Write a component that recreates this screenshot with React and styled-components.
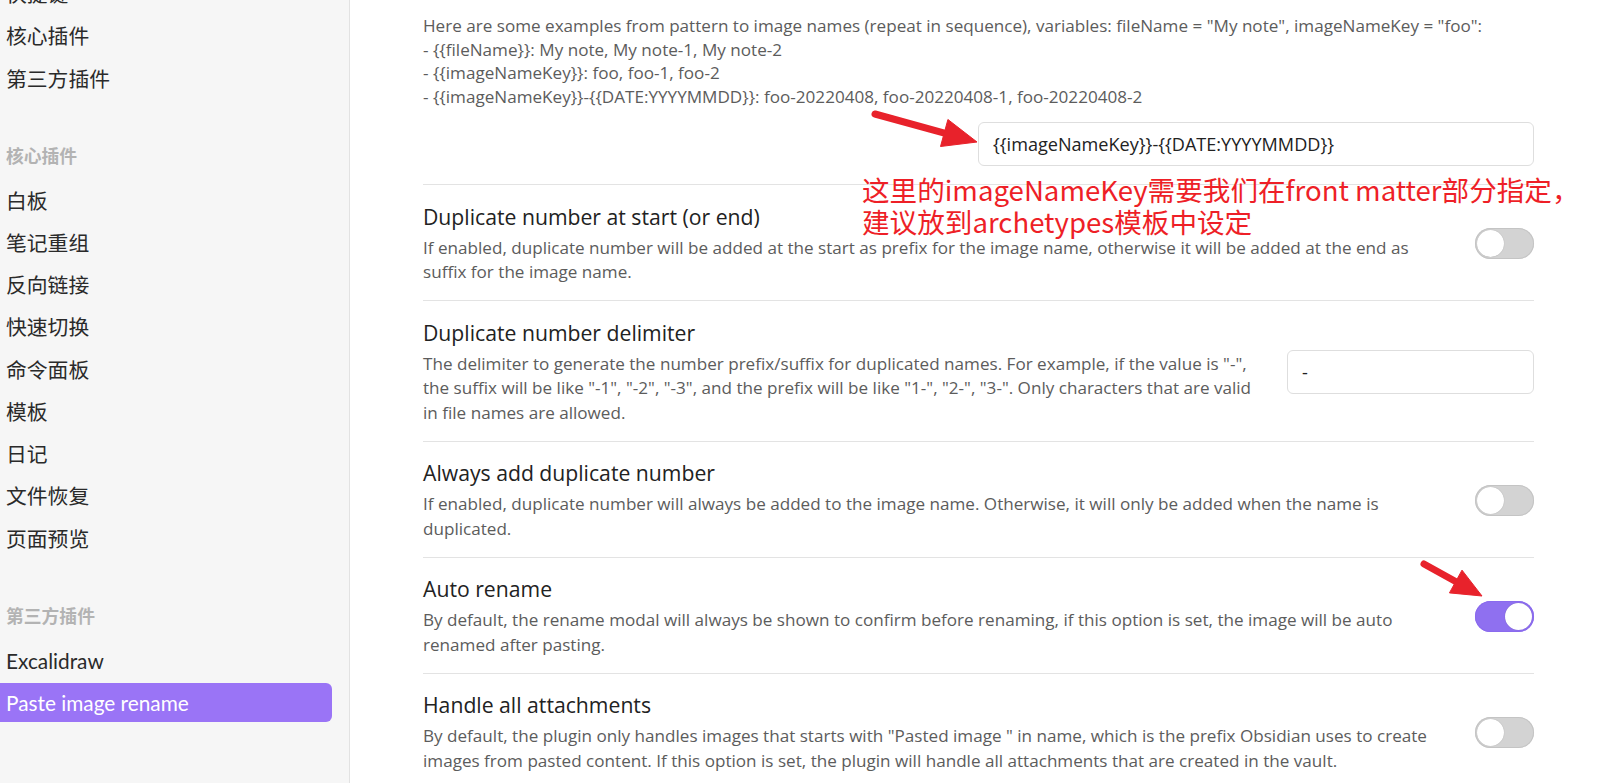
import React from "react";
import styled, { createGlobalStyle } from "styled-components";

const GlobalStyle = createGlobalStyle`
  html, body {
    margin: 0;
    padding: 0;
    background: #ffffff;
  }
  body {
    font-family: "Open Sans", "Noto Sans CJK SC", sans-serif;
    color: #222222;
  }
`;

const Page = styled.div`
  position: relative;
  display: flex;
  width: 1609px;
  height: 783px;
  overflow: hidden;
`;

const Sidebar = styled.nav`
  flex: 0 0 350px;
  box-sizing: border-box;
  background: #f6f6f6;
  border-right: 1px solid #e2e2e2;
  padding-right: 17px;
`;

const NavList = styled.div`
  margin-top: -26px;
`;

const NavItem = styled.div`
  height: 39px;
  line-height: 39px;
  margin-bottom: 3.25px;
  padding-left: 6px;
  font-family: "Lato", "Noto Sans CJK SC", sans-serif;
  font-size: 20.8px;
  color: ${(p) => (p.$active ? "#ffffff" : "#2a2a2a")};
  background: ${(p) => (p.$active ? "#9a74f6" : "transparent")};
  border-radius: 0 6px 6px 0;
  white-space: nowrap;
`;

const NavHeader = styled.div`
  margin: 45px 0 14px;
  padding-left: 6px;
  height: 24px;
  line-height: 24px;
  font-family: "Noto Sans CJK SC", sans-serif;
  font-size: 17.8px;
  font-weight: 700;
  color: #b3b3b3;
`;

const Main = styled.main`
  position: relative;
  flex: 1;
  min-width: 0;
  padding: 14px 75px 0 73px;
`;

const Intro = styled.div`
  font-size: 17.1px;
  line-height: 23.5px;
  color: #5c5c5c;
  white-space: pre-line;
`;

const InputRow = styled.div`
  display: flex;
  justify-content: flex-end;
  margin-top: 14px;
  padding-bottom: 18px;
`;

const TextInput = styled.input`
  box-sizing: border-box;
  width: ${(p) => p.$width}px;
  height: 44px;
  padding: 0 14px;
  border: 1px solid #dedede;
  border-radius: 6px;
  background: #ffffff;
  font-family: "Open Sans", sans-serif;
  font-size: 18.1px;
  color: #222222;
  outline: none;
`;

const SettingRow = styled.div`
  display: flex;
  align-items: center;
  gap: 24px;
  border-top: 1px solid #e3e3e3;
  padding: 17.5px 0 15.5px;
`;

const Info = styled.div`
  flex: 1;
  min-width: 0;
`;

const Name = styled.div`
  font-size: 21.2px;
  line-height: 28px;
  color: #222222;
`;

const Desc = styled.div`
  margin-top: 5px;
  font-size: 17.1px;
  line-height: 24.5px;
  color: #5c5c5c;
`;

const Toggle = styled.div`
  flex: 0 0 auto;
  box-sizing: border-box;
  display: flex;
  align-items: center;
  justify-content: ${(p) => (p.$on ? "flex-end" : "flex-start")};
  width: 59px;
  height: 31px;
  padding: 0 2px;
  border-radius: 16px;
  background: ${(p) => (p.$on ? "#8f70f0" : "#d3d3d3")};
  box-shadow: inset 0 0 0 1px ${(p) => (p.$on ? "#8a6aee" : "#c4c4c4")};
`;

const Knob = styled.div`
  width: 27px;
  height: 27px;
  border-radius: 50%;
  background: #ffffff;
  box-shadow: 0 0 1px rgba(0, 0, 0, 0.25);
`;

const Note = styled.div`
  position: absolute;
  left: 512px;
  top: 173px;
  font-family: "Noto Sans CJK SC", sans-serif;
  font-size: 27.6px;
  line-height: 32px;
  color: #ee1f27;
  white-space: nowrap;
  z-index: 2;
`;

const Overlay = styled.svg`
  position: absolute;
  left: 0;
  top: 0;
  pointer-events: none;
  z-index: 3;
`;

const Arrow = ({ x1, y1, x2, y2, head = 30, wing = 13 }) => {
  const len = Math.hypot(x2 - x1, y2 - y1);
  const ux = (x2 - x1) / len;
  const uy = (y2 - y1) / len;
  const bx = x2 - ux * head;
  const by = y2 - uy * head;
  const nx = -uy * wing;
  const ny = ux * wing;
  return (
    <g fill="#e8222b" stroke="#e8222b">
      <line x1={x1} y1={y1} x2={bx + ux * 4} y2={by + uy * 4} strokeWidth="7" strokeLinecap="round" />
      <polygon points={`${x2},${y2} ${bx + nx},${by + ny} ${bx - nx},${by - ny}`} strokeWidth="1" strokeLinejoin="round" />
    </g>
  );
};

const intro = `Here are some examples from pattern to image names (repeat in sequence), variables: fileName = "My note", imageNameKey = "foo":
- {{fileName}}: My note, My note-1, My note-2
- {{imageNameKey}}: foo, foo-1, foo-2
- {{imageNameKey}}-{{DATE:YYYYMMDD}}: foo-20220408, foo-20220408-1, foo-20220408-2`;

const settings = [
  {
    name: "Duplicate number at start (or end)",
    desc: "If enabled, duplicate number will be added at the start as prefix for the image name, otherwise it will be added at the end as suffix for the image name.",
    on: false,
  },
  {
    name: "Duplicate number delimiter",
    desc: 'The delimiter to generate the number prefix/suffix for duplicated names. For example, if the value is "-", the suffix will be like "-1", "-2", "-3", and the prefix will be like "1-", "2-", "3-". Only characters that are valid in file names are allowed.',
    input: "-",
  },
  {
    name: "Always add duplicate number",
    desc: "If enabled, duplicate number will always be added to the image name. Otherwise, it will only be added when the name is duplicated.",
    on: false,
  },
  {
    name: "Auto rename",
    desc: "By default, the rename modal will always be shown to confirm before renaming, if this option is set, the image will be auto renamed after pasting.",
    on: true,
  },
  {
    name: "Handle all attachments",
    desc: 'By default, the plugin only handles images that starts with "Pasted image " in name, which is the prefix Obsidian uses to create images from pasted content. If this option is set, the plugin will handle all attachments that are created in the vault.',
    on: false,
  },
];

const topItems = ["快捷键", "核心插件", "第三方插件"];
const coreItems = ["白板", "笔记重组", "反向链接", "快速切换", "命令面板", "模板", "日记", "文件恢复", "页面预览"];
const thirdItems = ["Excalidraw", "Paste image rename"];

const App = () => {
  return (
    <Page>
      <GlobalStyle />
      <Sidebar>
        <NavList>
          {topItems.map((t) => (
            <NavItem key={t}>{t}</NavItem>
          ))}
          <NavHeader>核心插件</NavHeader>
          {coreItems.map((t) => (
            <NavItem key={t}>{t}</NavItem>
          ))}
          <NavHeader>第三方插件</NavHeader>
          {thirdItems.map((t) => (
            <NavItem key={t} $active={t === "Paste image rename"}>
              {t}
            </NavItem>
          ))}
        </NavList>
      </Sidebar>
      <Main>
        <Intro>{intro}</Intro>
        <InputRow>
          <TextInput $width={556} readOnly defaultValue="{{imageNameKey}}-{{DATE:YYYYMMDD}}" />
        </InputRow>
        {settings.map((s) => (
          <SettingRow key={s.name}>
            <Info>
              <Name>{s.name}</Name>
              <Desc>{s.desc}</Desc>
            </Info>
            {s.input !== undefined ? (
              <TextInput $width={247} readOnly defaultValue={s.input} />
            ) : (
              <Toggle $on={s.on}>
                <Knob />
              </Toggle>
            )}
          </SettingRow>
        ))}
        <Note>
          这里的imageNameKey需要我们在front matter部分指定，
          <br />
          建议放到archetypes模板中设定
        </Note>
      </Main>
      <Overlay width="1609" height="783" viewBox="0 0 1609 783">
        <Arrow x1={875} y1={114} x2={977} y2={142} head={34} wing={14} />
        <Arrow x1={1424} y1={564} x2={1482} y2={596} />
      </Overlay>
    </Page>
  );
};

export default App;
